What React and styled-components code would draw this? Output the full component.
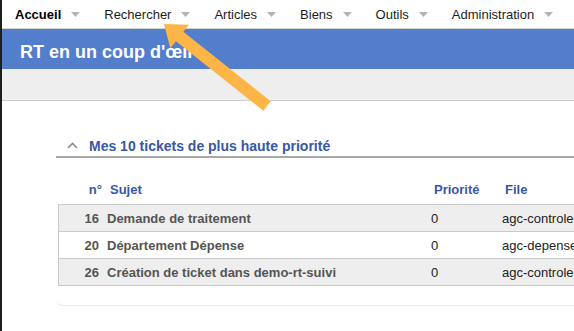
import React from 'react';
import styled, { createGlobalStyle } from 'styled-components';

const GlobalStyle = createGlobalStyle`
  html, body {
    margin: 0;
    padding: 0;
    background: #fff;
  }
  body {
    font-family: "Liberation Sans", Arial, Helvetica, sans-serif;
    font-size: 13px;
    color: #222;
  }
`;

const menu = ['Accueil', 'Rechercher', 'Articles', 'Biens', 'Outils', 'Administration'];

const tickets = [
  { id: 16, subject: 'Demande de traitement', priority: 0, queue: 'agc-controle' },
  { id: 20, subject: 'Département Dépense', priority: 0, queue: 'agc-depenses' },
  { id: 26, subject: 'Création de ticket dans demo-rt-suivi', priority: 0, queue: 'agc-controle' },
];

const Caret = () => (
  <svg width="9" height="5" viewBox="0 0 9 5">
    <polygon points="0,0 9,0 4.5,5" fill="#b3b3b3" />
  </svg>
);

const Chevron = () => (
  <svg width="11" height="7" viewBox="0 0 11 7">
    <polyline points="1,6 5.5,1.5 10,6" fill="none" stroke="#8a8a8a" strokeWidth="1.6" />
  </svg>
);

const Arrow = () => (
  <ArrowLayer width="574" height="331" viewBox="0 0 574 331">
    <polygon
      points="164,24 189,24.7 183.3,31.8 270.7,101.3 263.3,110.7 175.9,41.2 170.3,48.2"
      fill="#fdb548"
    />
  </ArrowLayer>
);

const App = () => (
  <Page>
    <GlobalStyle />
    <Nav>
      {menu.map((label, i) => (
        <NavItem key={label} $active={i === 0}>
          {label}
          <Caret />
        </NavItem>
      ))}
    </Nav>
    <TitleBar>
      <Title>RT en un coup d'œil</Title>
    </TitleBar>
    <SubBar />
    <Content>
      <Portlet>
        <PortletHeader>
          <Chevron />
          <PortletTitle>Mes 10 tickets de plus haute priorité</PortletTitle>
        </PortletHeader>
        <PortletBody>
          <ColHeads>
            <HeadCell $right>n°</HeadCell>
            <HeadCell $pad>Sujet</HeadCell>
            <HeadCell>Priorité</HeadCell>
            <HeadCell>File</HeadCell>
          </ColHeads>
          <Table>
            {tickets.map((t, i) => (
              <Row key={t.id} $shade={i % 2 === 0}>
                <Num>{t.id}</Num>
                <Subject>{t.subject}</Subject>
                <Cell>{t.priority}</Cell>
                <Cell>{t.queue}</Cell>
              </Row>
            ))}
          </Table>
        </PortletBody>
      </Portlet>
    </Content>
    <Arrow />
  </Page>
);

const Page = styled.div`
  position: relative;
  width: 574px;
  height: 331px;
  overflow: hidden;
  box-sizing: border-box;
  border-left: 2px solid #1e1e1e;
`;

const Nav = styled.nav`
  display: flex;
  align-items: center;
  gap: 24px;
  height: 28px;
  padding-left: 13px;
  border-bottom: 1px solid #d2d2d2;
`;

const NavItem = styled.div`
  display: flex;
  align-items: center;
  gap: 10px;
  white-space: nowrap;
  font-weight: ${(p) => (p.$active ? 'bold' : 'normal')};
  color: ${(p) => (p.$active ? '#000' : '#1d1d1d')};
`;

const TitleBar = styled.div`
  height: 40px;
  box-sizing: border-box;
  padding: 14px 18px 0;
  background: #527ecc;
`;

const Title = styled.h1`
  margin: 0;
  font-size: 18px;
  line-height: 18px;
  font-weight: bold;
  color: #fff;
  white-space: nowrap;
`;

const SubBar = styled.div`
  height: 31px;
  background: #eeeeee;
  border-bottom: 1px solid #cccccc;
`;

const Content = styled.main`
  padding: 34px 0 0 54px;
`;

const Portlet = styled.section`
  width: 570px;
`;

const PortletHeader = styled.div`
  display: flex;
  align-items: center;
  gap: 11px;
  height: 21px;
  padding-left: 11px;
  border-bottom: 2px solid #a8a8a8;
`;

const PortletTitle = styled.h2`
  margin: 0;
  font-size: 14px;
  font-weight: bold;
  color: #3857a6;
  white-space: nowrap;
`;

const PortletBody = styled.div`
  margin-left: 1px;
  padding-bottom: 19px;
  border-bottom: 1px solid #e9e9e9;
  border-bottom-left-radius: 6px;
`;

const columns = '40px 332px 71px 1fr';

const ColHeads = styled.div`
  display: grid;
  grid-template-columns: ${columns};
  align-items: center;
  height: 22px;
  margin-top: 20px;
  padding-left: 5px;
`;

const HeadCell = styled.div`
  font-weight: bold;
  color: #3857a6;
  white-space: nowrap;
  text-align: ${(p) => (p.$right ? 'right' : 'left')};
  padding-left: ${(p) => (p.$pad ? '8px' : '0')};
`;

const Table = styled.div`
  margin: 4px 0 0 1px;
  border: 1px solid #c9c9c9;
  border-right: none;
`;

const Row = styled.div`
  display: grid;
  grid-template-columns: ${columns};
  align-items: center;
  height: 26px;
  background: ${(p) => (p.$shade ? '#eeeeee' : '#ffffff')};
  & + & {
    border-top: 1px solid #c9c9c9;
  }
`;

const Num = styled.div`
  text-align: right;
  font-weight: bold;
  color: #555;
`;

const Subject = styled.div`
  padding-left: 8px;
  font-weight: bold;
  color: #555;
  white-space: nowrap;
`;

const Cell = styled.div`
  color: #222;
  white-space: nowrap;
`;

const ArrowLayer = styled.svg`
  position: absolute;
  left: -2px;
  top: 0;
  pointer-events: none;
`;

export default App;
